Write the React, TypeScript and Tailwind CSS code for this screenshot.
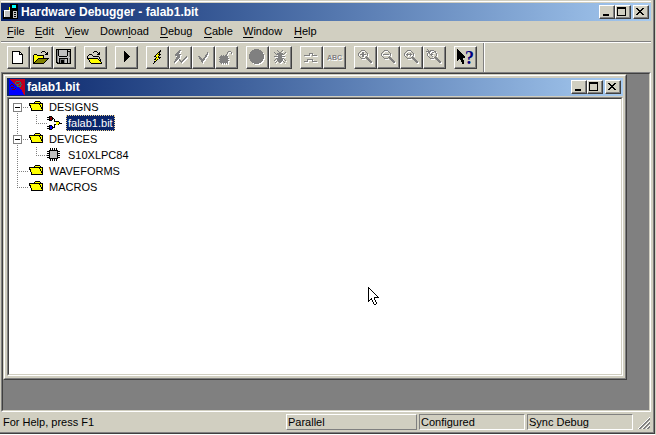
import React from "react";

const palette: Record<string, string> = {
  k: "#000000",
  w: "#ffffff",
  y: "#ffff00",
  d: "#808000",
  g: "#808080",
  l: "#c0c0c0",
  n: "#000080",
  b: "#0000ff",
  r: "#800000",
  R: "#c00020",
  c: "#00ffff",
  t: "#208070",
};

function dots(rows: string[], shift: number, fill?: string) {
  return rows.flatMap((row, y) =>
    [...row].map((ch, x) =>
      palette[ch] ? (
        <rect key={`${shift}-${x}-${y}`} x={x + shift} y={y + shift} width="1" height="1" fill={fill ?? palette[ch]} />
      ) : null
    )
  );
}

function Pixels({ rows, size = 17, width = size, disabled = false }: { rows: string[]; size?: number; width?: number; disabled?: boolean }) {
  return (
    <svg width={width} height={size} viewBox={`0 0 ${width} ${size}`} shapeRendering="crispEdges" className="shrink-0" aria-hidden="true">
      {disabled && dots(rows, 1, "#ffffff")}
      {dots(rows, 0)}
    </svg>
  );
}

const art = {
  fresh: ["", "", "..kkkkkkkk", "..kwwwwwwkk", "..kwwwwwwkwk", "..kwwwwwwkkkk", "..kwwwwwwwwwk", "..kwwwwwwwwwk", "..kwwwwwwwwwk", "..kwwwwwwwwwk", "..kwwwwwwwwwk", "..kwwwwwwwwwk", "..kwwwwwwwwwk", "..kwwwwwwwwwk", "..kkkkkkkkkkk"],
  open: ["", "", ".........kkk", "........k...k.k", ".............kk", ".kkk........kkk", "kyyykkkkkkk", "kyyyyyyyyyk", "kyyyyyyyyyk", "kyyyykkkkkkkkkkk", "kyyykdddddddddk", "kyykdddddddddk", "kykdddddddddk", "kkdddddddddk", "kkkkkkkkkkk"],
  save: ["kkkkkkkkkkkkkkk", "kgkllllllllkl.k", "kgkllllllllkkkk", "kgkllllllllklgk", "kgkllllllllklgk", "kgkllllllllklgk", "kgkllllllllklgk", "kglkkkkkkkkllgk", "kgllllllllllllk", "kglkkkkkkkkklgk", "kglkgggggllklgk", "kglkgkkkgllklgk", "kglkgkkkgllklgk", "kkgkgkkkgllklgk", ".kkkkkkkkkkkkkk"],
  swap: ["", "", ".......kkk", "......k...k.k", "...........kk", "..kkk.....kkk", ".k...k", "k.....kkkkkk", "k...........k", "kkkkkkkkkkk.k", ".kyyyyyyyyyk.k", "..kyyyyyyyyykk", "..kyyyyyyyyyyk", "...kyyyyyyyyyyk", "....kkkkkkkkkkk"],
  play: ["", "", "......k", "......kk", "......kkk", "......kkkk", "......kkkkk", "......kkkkkk", "......kkkkk", "......kkkk", "......kkk", "......kk", "......k"],
  bolt: ["", "...........k", "..........kk", ".........kk", "........kyk", ".......kykkk", "......kyyyk", ".....kkyyk", ".......kykkk", "......kyyyk", ".....kkyk", "......yk", ".....kk", ".....k", "....k"],
  boltCheck: ["", ".......gg", "......gg", ".....ggg", "....ggg", "...gggggg", "...ggggg", ".....ggg......g", "....gggg.....gg", "....ggg.....gg", "...ggg.g...gg", "...gg..gg.gg", "..gg....ggg", "..g......g"],
  check: ["", "", "", "............g", "............g", "...........gg", "..........gg", "...gg.....gg", "....gg...gg", "....ggg.gg", ".....ggggg", "......ggg", "......gg", ".......g"],
  bomb: ["", "", "..........ggg", ".........g...g", ".........g...g", "........g", "...g.g.gg", "..gggggggg", ".ggggggggg", "..ggggggggg", ".ggggggggg", "..ggggggggg", ".ggggggggg", "..gggggggg", "...g.g.g.g"],
  disc: [".....ggggg", "...ggggggggg", "..ggggggggggg", ".ggggggggggggg", ".ggggggggggggg", "ggggggggggggggg", "ggggggggggggggg", "ggggggggggggggg", "ggggggggggggggg", "ggggggggggggggg", ".ggggggggggggg", ".ggggggggggggg", "..ggggggggggg", "...ggggggggg", ".....ggggg"],
  bug: ["", ".....g....g", "......g..g", "..g....gg....g", "...g.gggggg.g", "....gggggggg", "......gggg", "..ggggggggggg", "......gggg", "....gggggggg", "...g.gggggg.g", "..g..gggggg..g", "....g.gggg.g", "...g...gg...g"],
  wave: ["", "", "", "", "......gggg", "......g..g", ".gggggg..ggggg", "", "", "", "....gggggg", "....g....g", ".gggg....ggggg"],
  zoomIn: ["", "....gggg", "...g....g", "..g..gg..g", ".g...gg...g", ".g.gggggg.g", ".g...gg...g", "..g..gg..g", "...g....ggg", "....gggg.ggg", "..........ggg", "...........ggg", "............ggg", ".............gg"],
  zoomOut: ["", "....gggg", "...g....g", "..g......g", ".g........g", ".g.gggggg.g", ".g........g", "..g......g", "...g....ggg", "....gggg.ggg", "..........ggg", "...........ggg", "............ggg", ".............gg"],
  zoomFit: ["", "....gggg", "...g....g", "..g......g", ".g..g..g..g", ".g.gggggg.g", ".g..g..g..g", "..g......g", "...g....ggg", "....gggg.ggg", "..........ggg", "...........ggg", "............ggg", ".............gg"],
  zoomSel: [".g", "..g.gggg", "ggggg...gg", "..gg..gg.g", ".g.g.g....g", ".g..ggg...g", ".g...g....g", "..g...g..g", "...g....ggg", "....gggg.ggg", "..........ggg", "...........ggg", "............ggg", ".............gg"],
  pointer: ["k", "kk", "kkk", "kkkk", "kkkkk", "kkkkkk", "kkkkkkk", "kkkkkkkk", "kkkkkkkk", "kkkkkk", "kk.kkk", "k...kkk", "....kkk", ".....kk", ".....kk"],
  folder: ["", "", "......kkkkk", ".....kyyyyyk", "kkkkkkkkkkkkkk", "kyyyyyyyyykyyk", "kkyyyyyyyyykyk", ".kyyyyyyyyykyk", ".kyyyyyyyyyykk", "..kyyyyyyyyykk", "..kyyyyyyyyyyk", "..kkkkkkkkkkkk"],
  gates: ["", "..kkk", "kkkrrk", "..krrkk", "kkkrrk.k", "..kkk..k", ".......kkkkk", ".........yyyk", ".........yyykkk", ".......kkyyk", "..kkk..k", "kkkbbk.k", "..kbbkkk", "kkkbbk", "..kkk"],
  chip: ["", "...k.k.k.k", "...k.k.k.k", "..kkkkkkkkk", "kkklllllllkkk", "..klllllllk", "kkklllllllkkk", "..klllllllk", "kkklllllllkkk", "..klllllllk", "kkklllllllkkk", "..kkkkkkkkk", "...k.k.k.k", "...k.k.k.k"],
  appIcon: [".......kkkkkkkk", ".......kkcccckk", ".......kkcccckk", "......ykkcccckk", "......ykkkkkkkk", "......ykkkkkkkk", ".wwwwwwkkkkkkkk", "kwlllllkkkllllk", "kwlllllkkklkklk", "kwlllllkkkllllk", "kwlllllkkklkklk", "kwlllllkkkllllk", "kwlllllkkklkklk", "kkkkkkkkkkllllk", "kkkkkkkkkkkkkkk"],
  docIcon: ["bRRRRRRRRRRRRRRR", "bbRRRRRRRRRRRRRR", "bbbRRRRttttRRRRR", "bbbbRRtRRRRtRRRR", "bbbbbRtRRRttRRRR", "bbrrbbRtttRRtRRR", "brbbrbbRtRRtRRRR", "bbbbbbbbttttRRRR", "bbrrrbbbbbRRRRRR", "bbbbbbrbbbbRRRRR", "bbbrrrbbbbbbRRRR", "bbbbbbbbbbbbbRRR", "bbbbbbbbbbbbbRRR", "bbbbbbbbbbbbbbRR", "bbbbbbbbbbbbbbRR", "bbbbbbbbbbbbbbbR"],
  min: ["", "", "", "", "", "", "", "", "...kkkkkk", "...kkkkkk"],
  max: ["", ".kkkkkkkkk", ".kkkkkkkkk", ".k.......k", ".k.......k", ".k.......k", ".k.......k", ".k.......k", ".k.......k", ".kkkkkkkkk"],
  close: ["", "", "..kk....kk", "...kk..kk", "....kkkk", ".....kk", "....kkkk", "...kk..kk", "..kk....kk"],
  cursor: ["k", "kk", "kwk", "kwwk", "kwwwk", "kwwwwk", "kwwwwwk", "kwwwwwwk", "kwwwwwwwk", "kwwwwwwwwk", "kwwwwwkkkkk", "kwwkwwk", "kwkkwwk", "kk..kwwk", "k...kwwk", ".....kwwk", ".....kwwk", "......kk"],
};

const raised = "border border-t-white border-l-white border-r-[#404040] border-b-[#404040] shadow-[inset_-1px_-1px_0_#808080]";
const sunken = "border border-t-[#808080] border-l-[#808080] border-r-white border-b-white";

function CaptionButton({ label, rows }: { label: string; rows: string[] }) {
  return (
    <button aria-label={label} className={`flex h-[14px] w-4 items-start overflow-hidden bg-[#d1cfc1] ${raised}`}>
      <Pixels rows={rows} size={12} />
    </button>
  );
}

function TitleBar({ icon, children }: { icon: string[]; children: React.ReactNode }) {
  return (
    <div className="flex h-[18px] shrink-0 items-center bg-linear-to-r from-[#0a246a] to-[#a6caf0] pr-0.5 pl-0.5 text-white">
      <Pixels rows={icon} size={16} />
      <div className="flex-1 truncate pl-0.5 text-[12px] leading-[18px] font-bold">{children}</div>
      <CaptionButton label="Minimize" rows={art.min} />
      <CaptionButton label="Maximize" rows={art.max} />
      <div className="w-0.5" />
      <CaptionButton label="Close" rows={art.close} />
    </div>
  );
}

type Tool = { label: string; rows?: string[]; disabled?: boolean };

const tools: Tool[][] = [
  [{ label: "New", rows: art.fresh }, { label: "Open", rows: art.open }, { label: "Save", rows: art.save }],
  [{ label: "Change design", rows: art.swap }],
  [{ label: "Run", rows: art.play }],
  [
    { label: "Download", rows: art.bolt },
    { label: "Download and verify", rows: art.boltCheck, disabled: true },
    { label: "Verify", rows: art.check, disabled: true },
    { label: "Reset", rows: art.bomb, disabled: true },
  ],
  [{ label: "Stop", rows: art.disc, disabled: true }, { label: "Debug", rows: art.bug, disabled: true }],
  [{ label: "Waveforms", rows: art.wave, disabled: true }, { label: "Names", disabled: true }],
  [
    { label: "Zoom in", rows: art.zoomIn, disabled: true },
    { label: "Zoom out", rows: art.zoomOut, disabled: true },
    { label: "Zoom full", rows: art.zoomFit, disabled: true },
    { label: "Zoom previous", rows: art.zoomSel, disabled: true },
  ],
];

const toolButton = `flex h-[23px] w-[23px] items-center justify-center overflow-hidden ${raised}`;

function ToolBar() {
  return (
    <div className="flex h-[29px] shrink-0">
      <div role="toolbar" className="flex gap-2 border-r border-[#808080] pt-[3px] pr-1.5 pl-1.5">
        {tools.map((group, i) => (
          <div key={i} className="flex">
            {group.map((tool) => (
              <button key={tool.label} aria-label={tool.label} disabled={tool.disabled} className={toolButton}>
                {tool.rows ? (
                  <Pixels rows={tool.rows} disabled={tool.disabled} />
                ) : (
                  <span className="text-[7px] leading-none font-bold text-[#808080] [text-shadow:1px_1px_0_#ffffff]">ABC</span>
                )}
              </button>
            ))}
          </div>
        ))}
        <button aria-label="Context help" className={toolButton}>
          <Pixels rows={art.pointer} width={8} />
          <span className="font-['Liberation_Serif',serif] text-[18px] leading-4 font-bold text-[#000080]">?</span>
        </button>
      </div>
      <div className="w-px bg-white" />
    </div>
  );
}

const menus: [string, string, string, string][] = [
  ["", "F", "ile", "w-7"],
  ["", "E", "dit", "w-[30px]"],
  ["", "V", "iew", "w-[35px]"],
  ["Down", "l", "oad", "w-[60px]"],
  ["", "D", "ebug", "w-11"],
  ["", "C", "able", "w-[39px]"],
  ["", "W", "indow", "w-[51px]"],
  ["", "H", "elp", "w-9"],
];

function Guide({ down, up, tick, box, wide }: { down?: boolean; up?: boolean; tick?: boolean; box?: boolean; wide?: boolean }) {
  const x = wide ? 8 : 7;
  const w = wide ? 20 : 18;
  return (
    <svg width={w} height="16" shapeRendering="crispEdges" stroke="#808080" fill="none" className="shrink-0">
      {up && <path d={`M${x + 0.5} 0V8`} strokeDasharray="1 1" />}
      {down && <path d={`M${x + 0.5} 8V16`} strokeDasharray="1 1" />}
      {tick && <path d={`M${x} 8.5H${w}`} strokeDasharray="1 1" />}
      {box && <rect x="4.5" y="4.5" width="8" height="8" fill="#ffffff" />}
      {box && <path d="M6 8.5H11" stroke="#000000" />}
    </svg>
  );
}

function Branch({ name, open, first, last, child }: { name: string; open?: boolean; first?: boolean; last?: boolean; child?: React.ReactNode }) {
  return (
    <li role="treeitem" aria-expanded={open}>
      <div className="flex h-4">
        {open ? (
          <button aria-label={`Collapse ${name}`} className="flex">
            <Guide wide box tick down up={!first} />
          </button>
        ) : (
          <Guide wide tick up down={!last} />
        )}
        <Pixels rows={art.folder} size={16} />
        <span className="pl-1">{name}</span>
      </div>
      {child}
    </li>
  );
}

function Leaf({ name, icon, selected }: { name: string; icon: string[]; selected?: boolean }) {
  return (
    <ul role="group">
      <li role="treeitem" aria-selected={selected} className="flex h-4">
        <Guide wide up down />
        <Guide up tick />
        <Pixels rows={icon} size={16} />
        <span className={`ml-[3px] px-0.5 ${selected ? "bg-[#0a246a] text-white outline-1 -outline-offset-1 outline-[#f5db95] outline-dotted" : ""}`}>
          {name}
        </span>
      </li>
    </ul>
  );
}

function DesignWindow() {
  return (
    <section className="flex flex-1 flex-col border border-t-[#d1cfc1] border-l-[#d1cfc1] border-r-[#404040] border-b-[#404040] bg-[#d1cfc1]">
      <div className="flex flex-1 flex-col border border-t-white border-l-white border-r-[#808080] border-b-[#808080] p-0.5">
        <TitleBar icon={art.docIcon}>falab1.bit</TitleBar>
        <div className={`mt-px flex flex-1 ${sunken}`}>
          <div className="relative flex-1 border border-t-[#404040] border-l-[#404040] border-r-[#d1cfc1] border-b-[#d1cfc1] bg-white">
            <ul role="tree" className="text-[11px] leading-4">
              <Branch name="DESIGNS" open first child={<Leaf name="falab1.bit" icon={art.gates} selected />} />
              <Branch name="DEVICES" open child={<Leaf name="S10XLPC84" icon={art.chip} />} />
              <Branch name="WAVEFORMS" />
              <Branch name="MACROS" last />
            </ul>
            <div className="pointer-events-none absolute top-[188px] left-[359px]">
              <Pixels rows={art.cursor} size={18} />
            </div>
          </div>
        </div>
      </div>
    </section>
  );
}

export default function App() {
  return (
    <div className="flex h-screen flex-col border-r border-b border-r-[#d1cfc1] border-b-white bg-[#d1cfc1] font-['Liberation_Sans',sans-serif] text-black">
      <main className="flex flex-1 flex-col border-r border-b border-[#404040]">
        <div className="flex flex-1 flex-col border-r border-b border-[#808080] pr-0.5 pl-px">
          <div className="mt-px mb-px h-px bg-white" />
          <TitleBar icon={art.appIcon}>Hardware Debugger - falab1.bit</TitleBar>
          <nav className="flex h-5 text-[11px] leading-5">
            {menus.map(([before, key, after, width]) => (
              <button key={key + after} className={`pl-1.5 text-left whitespace-nowrap ${width}`}>
                {before}
                <span className="underline underline-offset-2">{key}</span>
                {after}
              </button>
            ))}
          </nav>
          <div className="h-0.5 border-t border-b border-t-[#808080] border-b-white" />
          <ToolBar />
          <div className={`flex flex-1 ${sunken}`}>
            <div className="flex flex-1 border border-t-[#404040] border-l-[#404040] border-r-[#d1cfc1] border-b-[#d1cfc1] bg-[#808080] pr-[22px] pb-[30px]">
              <DesignWindow />
            </div>
          </div>
          <footer className="flex h-5 gap-0.5 py-0.5 text-[11px] leading-[14px]">
            <span className="flex-1 pl-0.5 leading-4">For Help, press F1</span>
            <span className="w-[131px] border border-t-white border-l-white border-r-[#808080] border-b-[#808080] pl-px">Parallel</span>
            <span className={`w-[106px] pl-px ${sunken}`}>Configured</span>
            <span className={`w-[106px] pl-px ${sunken}`}>Sync Debug</span>
            <svg width="16" height="16" shapeRendering="crispEdges" className="shrink-0" aria-hidden="true">
              <path d="M3 15L15 3M7 15L15 7M11 15L15 11" stroke="#ffffff" />
              <path d="M4 15L15 4M5 15L15 5M8 15L15 8M9 15L15 9M12 15L15 12M13 15L15 13" stroke="#808080" />
            </svg>
          </footer>
        </div>
      </main>
    </div>
  );
}
